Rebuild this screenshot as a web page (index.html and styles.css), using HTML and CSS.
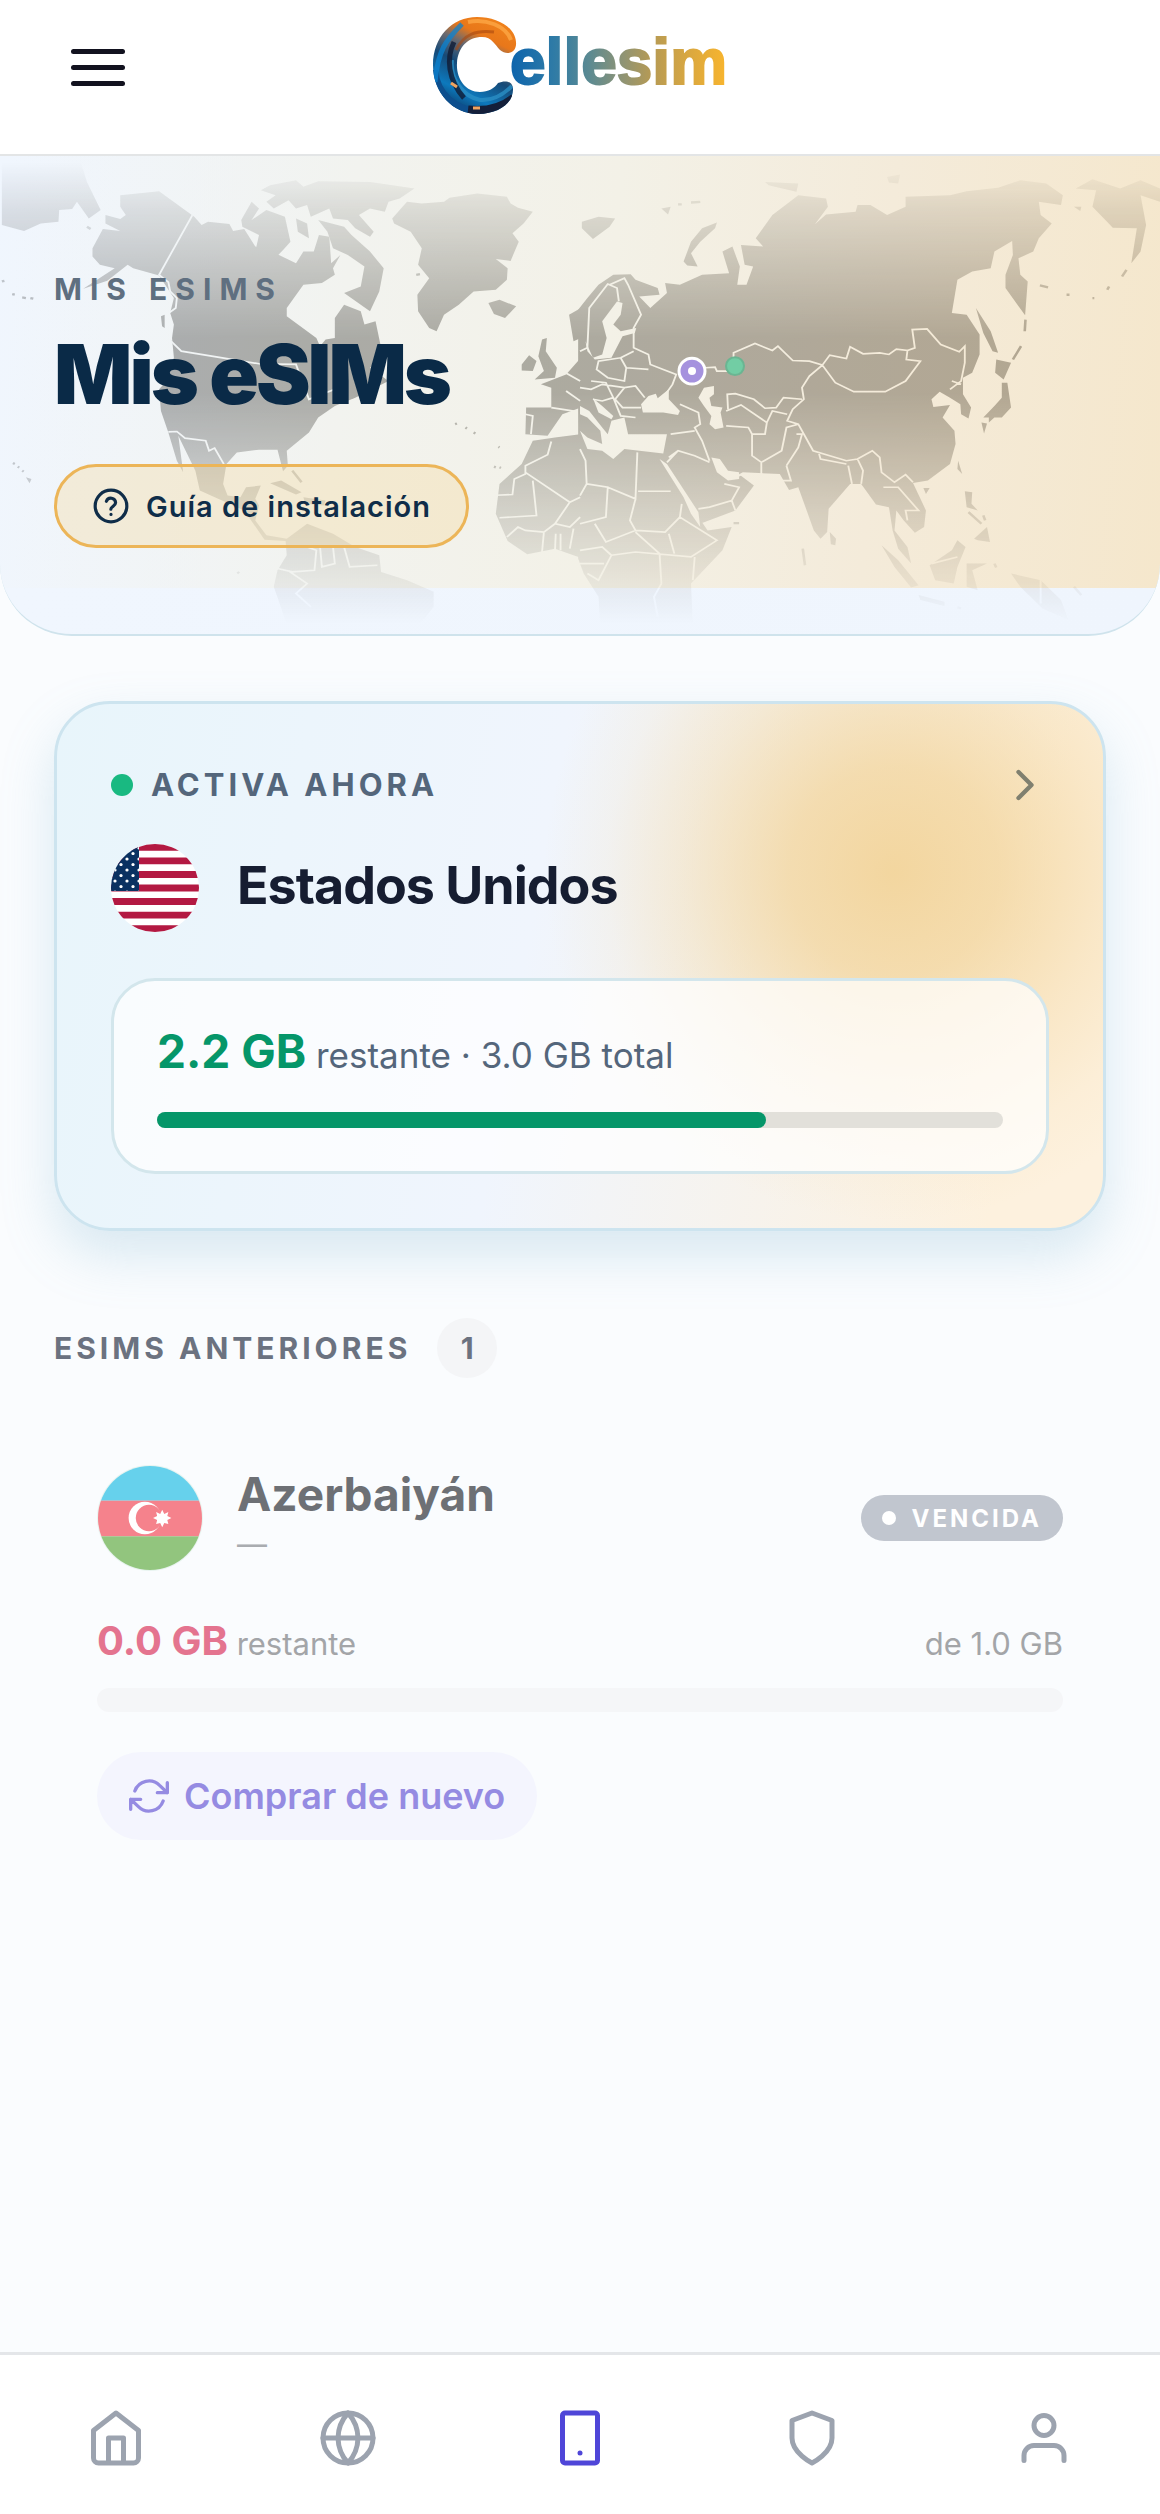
FILE: index.html
```html
<!DOCTYPE html>
<html lang="es">
<head>
<meta charset="utf-8">
<meta name="viewport" content="width=device-width, initial-scale=1">
<title>Mis eSIMs</title>
<link rel="stylesheet" href="styles.css">
</head>
<body>
<header class="topbar">
  <button class="menu-button" type="button" aria-label="Menú"><span></span><span></span><span></span></button>
  <a class="brand" href="#" aria-label="Cellesim">
    <svg class="brand-logo" viewBox="0 0 320 110">
      <defs>
        <linearGradient id="word" x1="90" x2="310" y1="0" y2="0" gradientUnits="userSpaceOnUse">
          <stop offset="0" stop-color="#0d64ad"/><stop offset=".2" stop-color="#2f7ba6"/><stop offset=".36" stop-color="#5b8a92"/><stop offset=".5" stop-color="#8b9377"/><stop offset=".64" stop-color="#b59a55"/><stop offset=".82" stop-color="#dba83f"/><stop offset="1" stop-color="#fbb62c"/>
        </linearGradient>
        <linearGradient id="cShape" x1=".85" y1="0" x2=".35" y2="1">
          <stop offset="0" stop-color="#f58a1c"/><stop offset=".3" stop-color="#e8771a"/><stop offset=".42" stop-color="#6a6a70"/><stop offset=".58" stop-color="#164a78"/><stop offset=".78" stop-color="#0d79bd"/><stop offset="1" stop-color="#0c2348"/>
        </linearGradient>
        <clipPath id="cClip"><path d="M96 32C95 17 77 7 57 7C32 7 13 27 13 55C13 83 33 104 58 104C80 104 94 92 93 78C92 71 85 70 78 73C75 78 68 82 60 82C45 82 36 68 37 53C38 37 48 27 62 27C72 27 75 35 80 40C87 46 97 43 96 32Z"/></clipPath>
      </defs>
      <g clip-path="url(#cClip)">
        <rect width="110" height="110" fill="url(#cShape)"/>
        <path d="M15 60C16 84 36 101 60 101" fill="none" stroke="#0d4f8e" stroke-width="7"/>
        <path d="M15 72C18 40 26 30 42 14" fill="none" stroke="#0b83d2" stroke-width="5" opacity=".75"/>
        <path d="M32 50C30 68 42 86 60 90C74 91 84 84 92 76" fill="none" stroke="#2a8fc4" stroke-width="4" opacity=".8"/>
        <path d="M34 32C26 48 28 70 44 88" fill="none" stroke="#101c34" stroke-width="5" opacity=".8"/>
        <path d="M36 40C44 24 56 20 74 22" fill="none" stroke="#a8480f" stroke-width="3" opacity=".6"/>
        <path d="M48 12C66 8 86 16 91 30" fill="none" stroke="#ffac4a" stroke-width="4" opacity=".7"/>
        <path d="M48 100C66 102 82 98 94 88" fill="none" stroke="#141f3a" stroke-width="9"/>
        <path d="M53 98H60M31 73L37 77" stroke="#f0a460" stroke-width="3"/>
      </g>
      <text class="brand-word" x="90" y="74" fill="url(#word)" stroke="url(#word)">ellesim</text>
    </svg>
  </a>
</header>

<section class="hero">
  <svg class="hero-map" viewBox="0 4 1160 480" preserveAspectRatio="none" aria-hidden="true">
    <defs>
      <linearGradient id="tint" x1="0" x2="1160" y1="0" y2="0" gradientUnits="userSpaceOnUse">
        <stop offset="0" stop-color="#64686c"/><stop offset=".4" stop-color="#646259"/><stop offset="1" stop-color="#74664f"/>
      </linearGradient>
      <linearGradient id="fade" x1="0" x2="0" y1="10" y2="474" gradientUnits="userSpaceOnUse">
        <stop offset="0" stop-color="#fff" stop-opacity="0"/><stop offset=".1" stop-color="#fff" stop-opacity=".16"/><stop offset=".38" stop-color="#fff" stop-opacity=".5"/><stop offset=".5" stop-color="#fff" stop-opacity=".5"/><stop offset=".76" stop-color="#fff" stop-opacity=".22"/><stop offset="1" stop-color="#fff" stop-opacity="0"/>
      </linearGradient>
      <mask id="land" maskUnits="userSpaceOnUse" x="0" y="0" width="1160" height="490">
        <rect width="1160" height="490" fill="url(#fade)"/>
        <g class="map-lines" transform="scale(.37 .3333)">
          <path d="M520 190L430 370L455 392L460 420L478 440L475 470L455 486M455 562L490 600L700 638L800 640L835 745L905 715M455 843L478 842L500 862L556 870L565 900L580 892L605 940M830 1190L855 1200L850 1260L790 1265L750 1255M865 1190L870 1250L905 1240L900 1190M930 1190L945 1250L1020 1245M780 1262L830 1300L800 1330L840 1370M1420 790L1440 795L1435 850M1490 770L1560 782M1490 872L1480 912L1420 945L1420 970L1390 985L1385 1032L1340 1034M1420 965L1540 1055L1568 1040M1440 990L1450 1095L1350 1102M1500 1120L1540 1055M1370 1160L1400 1130L1420 1140L1470 1145L1500 1120L1540 1130L1568 1100M1465 1205L1470 1145M1500 1200L1502 1150M1515 1200L1515 1150M1540 1195L1550 1135M1520 660L1568 690M1530 720L1568 750"/>
        </g>
        <g class="map-lines" transform="translate(580) scale(.37 .3333)">
          <path d="M20 590L25 470L75 398L100 410L105 450M80 400L120 380L130 400L165 490L145 530L145 590L185 610L190 640L225 655L260 670L250 700L225 740M50 630L110 620L125 650L120 690L75 680L45 655ZM110 620L145 600M125 650L185 655M0 710L30 715L60 700L120 710L150 705L175 740M30 690L70 695L90 740L60 750L35 745M90 740L110 795L150 800M120 710L95 745L115 770L165 770M0 600L20 590M340 650L365 648L370 660L420 660M415 635L415 605L473 577L520 598L535 585L575 628L620 630L655 642L675 612L720 622L730 587L765 608L810 605L835 610L855 594L885 598L882 625L920 630L880 690L825 722L740 722L690 695L655 642M655 642L620 675L600 710L605 745L575 775L560 810L590 820L630 900L720 930L750 925L790 900L810 920L815 965L850 995L880 972L900 995M885 598L905 590L898 535L938 533L975 580L1025 602L1040 585L1040 635L1030 690L1000 715M400 775L398 730L420 728L470 745L500 772L530 770L550 740L600 745M395 780L435 762L505 815L500 850L465 850L455 830L395 825M505 815L520 780L560 790M465 850L465 915L490 935L545 900L558 830L590 820M490 935L490 970M558 945L590 890L600 850L585 850M558 945L570 990L545 990M645 905L650 925L720 940M725 945L735 1000M750 925L765 960L760 1000M270 760L320 785L325 820L310 830L330 870L350 930M245 850L310 840M240 920L265 900L310 915L350 935M235 935L265 900M320 1075L350 1070L410 1050L430 1010L390 1000M410 1050L420 1080M18 1000L15 930L0 895M18 1000L0 1035M18 1000L75 1010L70 1100L0 1120M75 1010L150 1045L155 905M157 1022L245 1022M150 1045L135 1110L150 1140L70 1175L40 1120M150 1140L230 1145L270 1100L275 1060M0 1200L60 1190L85 1215L50 1290L20 1270M85 1215L150 1205L300 1220L370 1170L270 1100M150 1145L215 1210L220 1300L200 1340L210 1400M310 1220L305 1290M240 1150L255 1210M820 1010L860 1010L915 1080L880 1080L885 1110M0 1240L65 1240M950 1240L1020 1220M1245 1280L1245 1360M1005 690L1030 700"/>
          <g class="map-water">
            <path d="M100 450L115 455L110 490L90 520L110 540L152 530L148 545L115 555L85 620L40 625L20 600L15 570L35 620L60 610L72 560L60 510Z"/>
            <path d="M170 785L165 760L185 735L205 728L210 742L240 715L240 745L270 780L265 792L225 785L200 785Z"/>
            <path d="M320 740L335 710L362 705L362 730L350 740L355 765L385 770L380 785L388 830L365 835L350 820L355 795L335 765Z"/>
            <path d="M215 925L235 940L320 1085L325 1130L300 1090L280 1040Z"/>
            <path d="M0 765L25 780L60 830L75 850L85 810L120 800L130 850L235 850L225 908L120 895L90 925L60 900L20 895L0 840L20 860L60 880L55 840L20 800L0 790Z"/>
            <path d="M35 742L60 765L90 795L85 805L50 785Z"/>
            <path d="M355 920L378 925L400 960L430 965L430 985L400 990L370 965Z"/>
          </g>
        </g>
      </mask>
    </defs>
    <g mask="url(#land)">
      <mask id="shape" maskUnits="userSpaceOnUse" x="0" y="0" width="1160" height="490">
        <g class="map-land" transform="scale(.37 .3333)">
          <path d="M5 0L210 0L235 90L272 175L240 200L208 150L195 172L160 175L158 210L110 215L65 238L5 220ZM325 130L430 118L525 195L545 220L562 210L620 217L630 238L660 232L690 285L735 300L800 335L820 300L848 300L862 250L890 255L895 335L920 310L900 350L905 370L870 395L820 400L775 470L775 495L855 560L865 585L880 565L905 560L905 500L930 460L975 480L985 520L1015 510L1030 590L1045 620L1000 650L1050 690L960 740L905 765L860 800L835 845L775 900L778 945L765 962L750 897L700 897L640 905L612 940L603 1000L615 1035L650 1040L665 1010L705 1005L690 1045L700 1065L690 1110L720 1155L775 1165L830 1120L900 1150L960 1190L1025 1215L1030 1265L1100 1290L1172 1325L1172 1370L1130 1430L1110 1470L790 1470L740 1310L750 1260L775 1215L772 1172L715 1168L660 1080L540 1020L528 960L482 855L495 965L478 930L455 845L435 780L430 715L450 690L470 620L465 560L470 520L460 485L470 440L430 372L360 350L345 340L290 388L225 412L310 350L270 340L250 315L250 290L278 232L325 238L285 215L285 190L325 202L340 190L325 165Z"/>
          <path d="M1060 200L1100 150L1140 155L1200 150L1215 138L1290 125L1370 135L1380 155L1400 168L1440 180L1415 215L1385 245L1402 270L1380 328L1340 322L1372 350L1370 385L1340 415L1280 420L1240 460L1200 490L1180 540L1160 530L1130 480L1128 430L1160 380L1130 340L1140 290L1110 240L1065 215Z"/>
          <path d="M652 205L680 150L700 170L680 205L720 175L770 195L785 270L765 295L735 330L690 300L700 250L655 225ZM860 205L930 225L950 250L1000 300L1037 350L1025 420L1000 480L930 425L975 405L985 345L940 310L900 290L885 240ZM705 115L730 100L800 85L820 105L860 88L1000 90L1120 110L1080 140L1050 150L1040 180L1000 170L970 190L1010 240L1000 255L960 230L940 205L900 200L890 170L840 195L830 160L800 170L780 145L740 170L720 150L745 130ZM800 200L830 215L835 260L805 240ZM1320 455L1350 445L1395 465L1365 500L1335 488ZM1465 565L1478 560L1475 600L1505 650L1500 680L1445 685L1470 660L1455 615ZM1410 640L1430 612L1450 630L1440 660L1410 658ZM1538 490L1570 470L1570 560L1550 570ZM1568 850L1500 860L1440 870L1410 940L1350 1000L1340 1090L1372 1172L1425 1212L1500 1195L1575 1225L1575 850ZM1422 770L1490 770L1490 710L1462 700L1530 670L1570 620L1570 770L1520 790L1480 855L1420 850ZM730 998L760 990L815 1025L800 1032ZM820 1040L880 1050L875 1065L825 1060ZM435 495L445 490L445 530L438 525ZM460 565L490 598L480 605ZM70 980L85 985L80 998ZM940 720L960 725L955 742L945 745Z"/>
          <path class="isles" d="M5 390L12 388M33 428L40 430M60 438L70 440M82 440L90 442M35 937L40 940M48 948L52 951M60 960L64 963M235 225L245 232M1230 820L1235 818M1258 830L1262 833M1280 845L1285 848M1347 888L1350 890M1335 948L1340 950M1350 950L1354 952M642 1265L646 1270M790 960L815 995M1125 370L1135 368"/>
        </g>
        <g class="map-land" transform="translate(580) scale(.37 .3333)">
          <path d="M-5 560L-5 475L20 440L50 400L90 370L137 368L150 385L210 410L215 430L160 435L190 470L235 425L230 395L270 400L330 370L403 365L385 300L412 285L432 345L425 400L450 400L468 345L445 340L435 280L495 285L475 260L520 190L590 130L665 140L670 165L635 218L665 188L745 180L750 160L785 160L830 190L880 165L880 135L1000 130L1045 118L1130 108L1190 85L1260 95L1305 130L1300 160L1240 150L1245 190L1275 215L1240 260L1225 300L1185 320L1190 370L1210 390L1203 492L1150 410L1150 370L1170 310L1168 268L1120 300L1110 350L1060 360L1020 385L1005 485L1045 490L1080 550L1080 610L1060 665L1035 680L1035 730L1057 770L1050 803L1030 790L1028 760L1000 740L972 722L950 745L955 768L1000 762L980 800L1012 840L1015 880L1000 940L940 990L900 997L935 1080L930 1130L905 1147L875 1110L855 1080L850 1140L885 1190L895 1240L860 1195L845 1140L835 1070L800 1062L760 1000L730 1000L672 1075L668 1145L650 1165L632 1140L590 1010L565 1018L540 970L440 965L400 990L435 975L470 1005L420 1080L330 1118L320 1100L345 1140L410 1130L385 1200L300 1300L305 1430L55 1430L50 1340L10 1270L-5 1225Z"/>
          <path d="M280 330L300 270L330 230L370 212L365 230L325 270L300 305L318 345L290 342ZM5 210L50 195L95 200L80 225L35 262L5 230ZM220 170L245 165L238 188ZM500 90L590 95L585 120L510 100ZM830 75L865 68L860 95L835 92ZM1385 165L1395 115L1340 110L1385 82L1460 110L1515 85L1568 110L1568 150L1515 130L1530 220L1515 300L1490 335L1505 230L1440 228L1420 205ZM1335 165L1355 165L1352 178ZM1070 470L1110 540L1130 605L1115 600L1090 545ZM1125 625L1165 635L1145 685L1122 665ZM1140 695L1155 695L1165 770L1140 800L1090 800L1120 765L1140 740ZM1085 815L1100 818L1092 848ZM1105 800L1120 800L1105 815ZM1022 930L1033 970L1020 955ZM928 1012L945 1012L935 1030ZM1040 1022L1060 1025L1058 1060L1075 1080L1045 1070ZM1065 1165L1100 1130L1108 1175L1075 1170ZM1042 1115L1022 1145ZM815 1185L860 1230L915 1305L895 1312L850 1250ZM945 1245L1005 1200L1020 1170L1042 1190L1020 1250L1010 1300L960 1290ZM1045 1240L1100 1240L1060 1260L1075 1320L1045 1310ZM915 1335L985 1355L985 1368L920 1350ZM1165 1270L1245 1290L1300 1350L1320 1410L1250 1375L1190 1310ZM675 1145L692 1165L690 1185L678 1182Z"/>
          <path class="isles" d="M265 158L275 158M300 152L325 150M1243 402L1265 408M1315 430L1323 430M1385 440L1390 440M1425 415L1430 405M1465 375L1477 355M1204 505L1202 540M1192 585L1170 625M1050 1085L1085 1120M1090 1095L1095 1110M1120 1240L1125 1252M1020 1372L1030 1375M1335 1310L1355 1335M602 1195L608 1245M415 1118L430 1118"/>
        </g>
      </mask>
      <rect width="1160" height="490" fill="url(#tint)" mask="url(#shape)"/>
    </g>
    <circle cx="735" cy="215" r="9" fill="#72cda4" stroke="#6bb592" stroke-width="2"/>
    <circle cx="692" cy="220" r="13" fill="#a592de" stroke="#fff" stroke-width="3"/>
    <circle cx="692" cy="220" r="4" fill="#fff"/>
  </svg>
  <div class="hero-content">
    <p class="eyebrow">MIS ESIMS</p>
    <h1>Mis eSIMs</h1>
    <a class="guide-link" href="#">
      <svg class="guide-icon" viewBox="0 0 24 24"><circle cx="12" cy="12" r="10"/><path d="M9.100 9a3 3 0 0 1 5.800 1c0 2-3 2.600-3 4M12 17.200v.1"/></svg>
      <span>Guía de instalación</span>
    </a>
  </div>
</section>

<main class="content">
  <article class="active-card">
    <div class="card-head">
      <span class="status-dot"></span>
      <p class="label">ACTIVA AHORA</p>
      <svg class="chevron" viewBox="0 0 24 24"><path d="M9 6l6 6-6 6"/></svg>
    </div>
    <div class="country">
      <svg class="flag-us" viewBox="0 0 88 88" role="img" aria-label="Bandera de Estados Unidos">
        <defs>
          <clipPath id="usClip"><circle cx="44" cy="44" r="44"/></clipPath>
          <pattern id="stars" width="12" height="11" patternUnits="userSpaceOnUse"><circle cx="4" cy="4" r="1.600" fill="#fff"/><circle cx="10" cy="9.500" r="1.600" fill="#fff"/></pattern>
        </defs>
        <g clip-path="url(#usClip)">
          <rect width="88" height="88" fill="#fff"/>
          <path d="M0 3.400H88M0 16.900H88M0 30.500H88M0 44H88M0 57.500H88M0 71.100H88M0 84.600H88" stroke="#b31942" stroke-width="6.770"/>
          <rect width="28" height="47" fill="#0a3161"/><rect width="28" height="47" fill="url(#stars)"/>
        </g>
      </svg>
      <h2>Estados Unidos</h2>
    </div>
    <div class="usage">
      <p class="usage-text"><strong>2.2 GB</strong> restante · 3.0 GB total</p>
      <div class="bar"><div class="bar-fill" style="width:72%"></div></div>
    </div>
  </article>

  <div class="section-head">
    <h3 class="label">ESIMS ANTERIORES</h3>
    <span class="count">1</span>
  </div>

  <article class="past-card">
    <div class="past-top">
      <svg class="flag-az" viewBox="0 0 104 104" role="img" aria-label="Bandera de Azerbaiyán">
        <defs><clipPath id="azClip"><circle cx="52" cy="52" r="51"/></clipPath></defs>
        <circle cx="52" cy="52" r="52" fill="#e8f4f0"/>
        <g clip-path="url(#azClip)">
          <rect width="104" height="35" fill="#66d1ec"/><rect y="35" width="104" height="35" fill="#f5828c"/><rect y="70" width="104" height="34" fill="#92c57e"/>
          <circle cx="47" cy="52" r="16" fill="#fff"/><circle cx="51" cy="52" r="13" fill="#f5828c"/>
          <path d="M64 44l2 4 4-2-1 4 4 2-4 2 1 4-4-1-2 4-2-4-4 1 1-4-4-2 4-2-1-4 4 2z" fill="#fff"/>
        </g>
      </svg>
      <div class="past-title"><h2>Azerbaiyán</h2><p>—</p></div>
      <span class="pill"><i></i>VENCIDA</span>
    </div>
    <div class="past-usage">
      <p><strong>0.0 GB</strong> restante</p>
      <p>de 1.0 GB</p>
    </div>
    <div class="past-bar"></div>
    <button class="buy" type="button">
      <svg class="buy-icon" viewBox="0 0 24 24"><path d="M23 4v6h-6M1 20v-6h6M3.510 9a9 9 0 0 1 14.850-3.360L23 10M1 14l4.640 4.360A9 9 0 0 0 20.490 15"/></svg>
      Comprar de nuevo
    </button>
  </article>
</main>

<nav class="tabbar" aria-label="Principal">
  <a href="#" aria-label="Inicio"><svg viewBox="0 0 24 24"><path d="M3 9l9-7 9 7v11a2 2 0 0 1-2 2H5a2 2 0 0 1-2-2zM9 22V12h6v10"/></svg></a>
  <a href="#" aria-label="Destinos"><svg viewBox="0 0 24 24"><circle cx="12" cy="12" r="10"/><path d="M2 12h20M12 2a15.300 15.300 0 0 1 4 10 15.300 15.300 0 0 1-4 10 15.300 15.300 0 0 1-4-10 15.300 15.300 0 0 1 4-10z"/></svg></a>
  <a class="current" href="#" aria-label="Mis eSIMs" aria-current="page"><svg viewBox="0 0 24 24"><rect x="5" y="2" width="14" height="20" rx="1"/><path d="M12 18v.01"/></svg></a>
  <a href="#" aria-label="Seguridad"><svg viewBox="0 0 24 24"><path d="M12 22s8-4 8-10V5l-8-3-8 3v7c0 6 8 10 8 10z"/></svg></a>
  <a href="#" aria-label="Perfil"><svg viewBox="0 0 24 24"><circle cx="12" cy="7" r="4"/><path d="M20 21v-2a4 4 0 0 0-4-4H8a4 4 0 0 0-4 4v2"/></svg></a>
</nav>
</body>
</html>
```
FILE: styles.css
```css
* { box-sizing: border-box; }

body {
  margin: 0;
  min-height: 100vh;
  display: flex;
  flex-direction: column;
  background: #fafcfe;
  color: #161d31;
  font-family: Inter, "Liberation Sans", sans-serif;
}

h1, h2, h3, p { margin: 0; }
svg { display: block; flex: none; }
a { color: inherit; text-decoration: none; }
button { border: 0; font: inherit; }

.topbar {
  display: grid;
  grid-template-columns: 1fr auto 1fr;
  align-items: start;
  height: 156px;
  padding: 10px 54px;
  background: #fff;
  border-bottom: 2px solid #e3e5e6;
}

.menu-button {
  display: flex;
  flex-direction: column;
  justify-content: center;
  gap: 11px;
  width: 88px;
  height: 114px;
  padding: 0 17px;
  background: none;
}
.menu-button span { width: 54px; height: 5px; border-radius: 3px; background: #12121f; }

.brand-logo { width: 320px; height: 110px; overflow: visible; }
.brand-word { font: bold 64px "Liberation Sans", Arial, sans-serif; stroke-width: 2px; }

.hero {
  position: relative;
  overflow: hidden;
  padding: 115px 54px 86px;
  border-bottom: 2px solid #cfe3ec;
  border-radius: 0 0 72px 72px;
  background:
    linear-gradient(95deg, #eff6fb00, #f2f3ef 30%, #f3f1e7 52%, #f4ebda 75%, #f5e7cc) 0 0 / 100% 432px no-repeat,
    linear-gradient(90deg, #f0f6fe, #eff5fd);
}
.hero-map { position: absolute; inset: 0; width: 100%; height: 100%; }
.map-land { fill: #fff; }
.isles { stroke: #fff; stroke-width: 7px; }
.map-lines path { fill: none; stroke: #000; stroke-width: 5px; }
.map-lines .map-water path { fill: #000; stroke: none; }

.hero-content { position: relative; display: flex; flex-direction: column; align-items: flex-start; }
.eyebrow { font-size: 30px; font-weight: 700; line-height: 36px; letter-spacing: 8px; color: #5f6f80; }
h1 { margin: 20px 0 41px; font-size: 82px; font-weight: 900; line-height: 96px; letter-spacing: -3px; color: #0a2a47; }

.guide-link {
  display: flex;
  align-items: center;
  gap: 16px;
  height: 84px;
  padding: 0 35px;
  border: 3px solid #ecb558;
  border-radius: 42px;
  background: #f5d79a55;
  font-size: 29px;
  font-weight: 600;
  letter-spacing: 1px;
  color: #0f2d49;
}
.guide-icon { width: 38px; height: 38px; }
.guide-icon, .buy-icon, .chevron, .tabbar svg { fill: none; stroke: currentColor; stroke-width: 2px; stroke-linecap: round; stroke-linejoin: round; }

.content { flex: 1; padding: 65px 54px 48px; }

.active-card {
  display: flex;
  flex-direction: column;
  padding: 54px;
  border: 3px solid #cde4ef;
  border-radius: 56px;
  background:
    radial-gradient(circle 350px at 80% 32%, #f2d295e0, #f2d295b0 30%, #f2d29550 60%, #f2d29518 82%, #f2d29500),
    linear-gradient(100deg, #e8f5fb, #f0f5fd 45%, #fdf1de 90%);
  box-shadow: 0 24px 52px #7fb4d045;
}
.card-head { display: flex; align-items: center; height: 54px; }
.status-dot { width: 22px; height: 22px; margin-right: 18px; border-radius: 50%; background: #19b981; }
.label { font-size: 30px; font-weight: 700; line-height: 36px; letter-spacing: 4px; color: #54667b; }
.card-head .label { font-size: 31px; }
.chevron { width: 52px; height: 52px; margin-left: auto; margin-right: -2px; color: #80806f; }

.country { display: flex; align-items: center; gap: 38px; margin: 32px 0 46px; }
.flag-us { width: 88px; height: 88px; }
.country h2 { padding-bottom: 4px; font-size: 52px; font-weight: 700; line-height: 60px; letter-spacing: -1px; }

.usage {
  padding: 40px 43px 43px;
  border: 3px solid #d3e6ec;
  border-radius: 44px;
  background: #ffffffb8;
}
.usage-text { font-size: 35px; line-height: 60px; color: #54667b; }
.usage-text strong { font-size: 46px; font-weight: 700; color: #059669; }
.bar { height: 16px; margin-top: 27px; border-radius: 8px; background: #e2e0da; }
.bar-fill { height: 100%; border-radius: 8px; background: #059669; }

.section-head { display: flex; align-items: center; gap: 26px; margin-top: 87px; }
.section-head .label { color: #6b7280; }
.count {
  width: 60px;
  height: 60px;
  border-radius: 50%;
  background: #f4f5f7;
  font-size: 30px;
  font-weight: 700;
  line-height: 60px;
  text-align: center;
  color: #6b7280;
}

.past-card { padding: 87px 43px 0; }
.past-top { display: flex; align-items: center; gap: 34px; }
.flag-az { width: 106px; height: 106px; }
.past-title { flex: 1; }
.past-title h2 { font-size: 46px; font-weight: 700; line-height: 56px; color: #6d7075; }
.past-title p { padding-bottom: 4px; font-size: 30px; line-height: 44px; color: #a9acb0; }
.pill {
  display: flex;
  align-items: center;
  gap: 15px;
  height: 46px;
  padding: 0 21px;
  border-radius: 23px;
  background: #c1c6cf;
  font-size: 24px;
  font-weight: 700;
  letter-spacing: 3px;
  color: #fff;
}
.pill i { width: 14px; height: 14px; border-radius: 50%; background: #fff; }

.past-usage { display: flex; justify-content: space-between; align-items: baseline; margin-top: 45px; font-size: 31px; line-height: 50px; color: #a3a5a8; }
.past-usage strong { font-size: 40px; font-weight: 700; color: #e4748f; }
.past-bar { height: 24px; margin-top: 19px; border-radius: 12px; background: #f5f6f8; }

.buy {
  display: flex;
  align-items: center;
  gap: 15px;
  height: 88px;
  margin-top: 40px;
  padding: 0 32px;
  border-radius: 44px;
  background: #f4f5fe;
  font-size: 36px;
  font-weight: 600;
  color: #958be2;
}
.buy-icon { width: 40px; height: 40px; }

.tabbar {
  position: sticky;
  bottom: 0;
  display: grid;
  grid-template-columns: repeat(5, 1fr);
  align-items: center;
  height: 162px;
  padding-top: 6px;
  border-top: 3px solid #e4e6e9;
  background: #fff;
  color: #9ca3af;
}
.tabbar a { display: flex; justify-content: center; }
.tabbar svg { width: 60px; height: 60px; }
.tabbar .current { color: #4f46d8; }
```
